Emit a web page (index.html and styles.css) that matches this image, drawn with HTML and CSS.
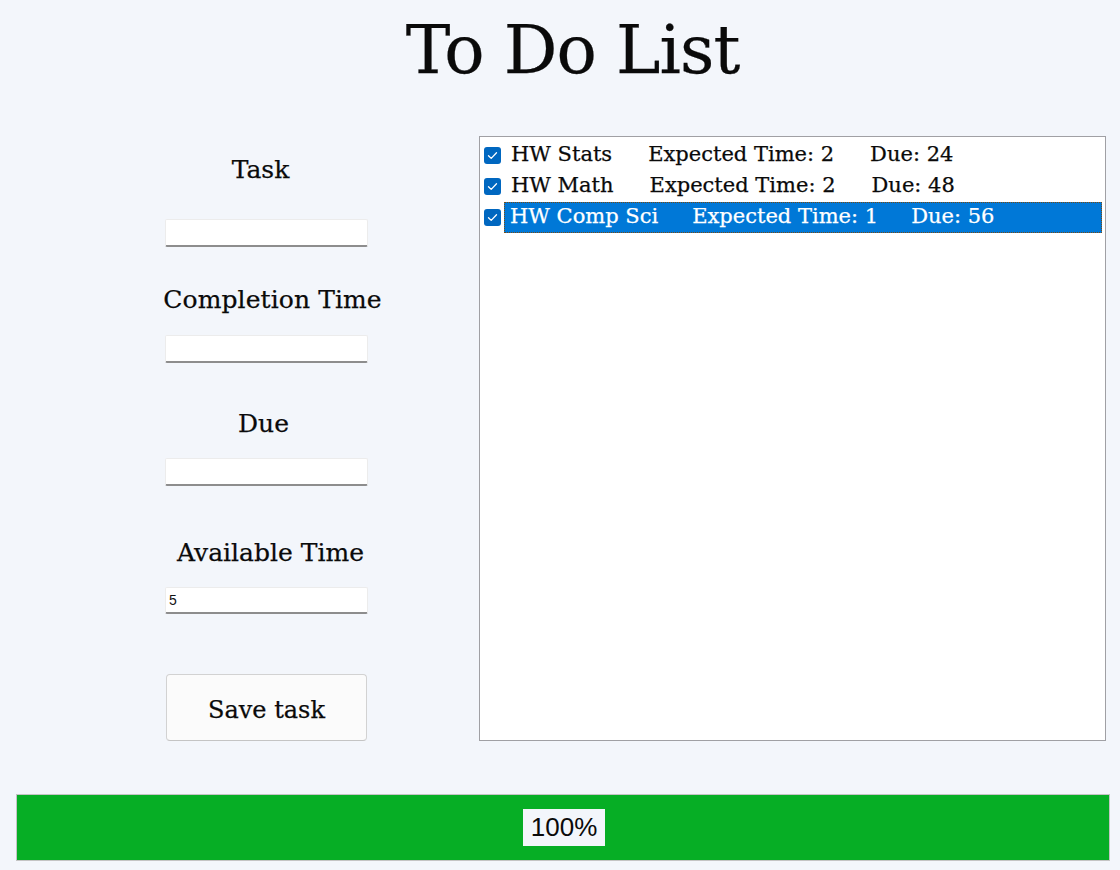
FILE: index.html
```html
<!DOCTYPE html>
<html>
<head>
<meta charset="utf-8">
<title>To Do List</title>
<link rel="stylesheet" href="styles.css">
</head>
<body>
<h1 class="title">To Do List</h1>
<div class="main">
  <form class="form">
    <label class="lbl lbl-task">Task</label>
    <input class="field f-task" type="text">
    <label class="lbl lbl-comp">Completion Time</label>
    <input class="field f-comp" type="text">
    <label class="lbl lbl-due">Due</label>
    <input class="field f-due" type="text">
    <label class="lbl lbl-avail">Available Time</label>
    <input class="field f-avail" type="text" value="5">
    <button class="save" type="button">Save task</button>
  </form>
  <div class="list">
    <div class="row">
      <span class="cb"><svg viewBox="0 0 17 17" width="17" height="17"><rect x="0" y="0" width="17" height="17" rx="3" fill="#0067c0"/><path d="M4.5 8.8 L7.2 11.4 L12.5 5.8" fill="none" stroke="#fff" stroke-width="1.3" stroke-linecap="round" stroke-linejoin="round"/></svg></span>
      <span class="item"><span class="name">HW Stats</span><span class="exp">Expected Time: 2</span><span class="due">Due: 24</span></span>
    </div>
    <div class="row">
      <span class="cb"><svg viewBox="0 0 17 17" width="17" height="17"><rect x="0" y="0" width="17" height="17" rx="3" fill="#0067c0"/><path d="M4.5 8.8 L7.2 11.4 L12.5 5.8" fill="none" stroke="#fff" stroke-width="1.3" stroke-linecap="round" stroke-linejoin="round"/></svg></span>
      <span class="item"><span class="name">HW Math</span><span class="exp">Expected Time: 2</span><span class="due">Due: 48</span></span>
    </div>
    <div class="row selected">
      <span class="cb"><svg viewBox="0 0 17 17" width="17" height="17"><rect x="0" y="0" width="17" height="17" rx="3" fill="#0067c0"/><path d="M4.5 8.8 L7.2 11.4 L12.5 5.8" fill="none" stroke="#fff" stroke-width="1.3" stroke-linecap="round" stroke-linejoin="round"/></svg></span>
      <span class="item"><span class="name">HW Comp Sci</span><span class="exp exp-sel">Expected Time: 1</span><span class="due due-sel">Due: 56</span></span>
    </div>
  </div>
</div>
<div class="progress">
  <div class="bar" style="width:100%"></div>
  <span class="pct">100%</span>
</div>
</body>
</html>
```

FILE: styles.css
```css
html, body {
  margin: 0;
  padding: 0;
  background: #f3f6fb;
}
body {
  font-family: "DejaVu Serif", "Liberation Serif", serif;
  color: #0a0a0a;
  width: 1120px;
  height: 870px;
  overflow: hidden;
  -webkit-text-stroke: 0.25px currentColor;
}
.title {
  margin: 0;
  padding-top: 5px;
  padding-left: 25px;
  height: 91px;
  font-weight: normal;
  font-size: 67px;
  line-height: 90px;
  text-align: center;
  letter-spacing: -1px;
}
.main {
  display: flex;
  margin-top: 40px;
  height: 605px;
}
.form {
  width: 203px;
  margin-left: 165px;
  display: flex;
  flex-direction: column;
  padding-top: 19px;
}
.lbl {
  display: block;
  font-size: 25px;
  line-height: 30px;
  height: 30px;
  text-align: center;
  white-space: nowrap;
}
.lbl-task { margin-left: -12px; }
.lbl-comp { margin-top: 38px; margin-right: -24px; margin-left: -12px; letter-spacing: 0.1px; }
.lbl-due { margin-top: 46px; margin-left: -6px; }
.lbl-avail { margin-top: 52px; margin-left: -8px; margin-right: -16px; }
.field {
  box-sizing: border-box;
  width: 203px;
  height: 28px;
  margin: 0;
  padding: 0 3px;
  background: #fff;
  border: 1px solid #ececec;
  border-bottom: 2px solid #8d8d8d;
  border-radius: 2px;
  font-family: "Liberation Sans", Arial, sans-serif;
  font-size: 14px;
  color: #111;
  outline: none;
  -webkit-text-stroke: 0;
}
.f-task { margin-top: 34px; }
.f-comp { margin-top: 20px; }
.f-due { margin-top: 19px; }
.f-avail { margin-top: 19px; }
.save {
  box-sizing: border-box;
  margin-top: 60px;
  margin-left: 1px;
  width: 201px;
  height: 67px;
  background: #fbfbfb;
  border: 1px solid #d2d2d2;
  border-bottom-color: #c4c4c4;
  border-radius: 4px;
  font-family: "DejaVu Serif", "Liberation Serif", serif;
  font-size: 24px;
  color: #0a0a0a;
  padding: 5px 0 0 0;
  -webkit-text-stroke: 0.25px currentColor;
}
.list {
  box-sizing: border-box;
  margin-left: 111px;
  width: 627px;
  height: 605px;
  background: #fff;
  border: 1px solid #a0a0a4;
  padding: 3px 3px 3px 4px;
}
.row {
  display: flex;
  align-items: center;
  height: 31px;
}
.cb {
  display: flex;
  width: 17px;
  height: 17px;
  margin-right: 3px;
  flex: none;
}
.item {
  flex: 1;
  box-sizing: border-box;
  height: 31px;
  display: flex;
  align-items: center;
  padding-left: 6px;
  padding-bottom: 3px;
  font-size: 21px;
  white-space: nowrap;
  border: 1px dotted transparent;
}
.exp { margin-left: 36px; }
.due { margin-left: 36px; }
.exp-sel { margin-left: 34px; }
.due-sel { margin-left: 33px; }
.selected .item {
  background: #0078d7;
  color: #fff;
  border: 1px dotted #7a4a10;
  padding-left: 5px;
}
.progress {
  position: relative;
  box-sizing: border-box;
  margin-top: 53px;
  margin-left: 16px;
  width: 1094px;
  height: 67px;
  border: 1px solid #c4c4c4;
  background: #e6e6e6;
  display: flex;
  align-items: center;
  justify-content: center;
}
.bar {
  position: absolute;
  left: 0;
  top: 0;
  bottom: 0;
  background: #06ae25;
}
.pct {
  position: relative;
  background: #f3f6fb;
  font-family: "Liberation Sans", Arial, sans-serif;
  font-size: 26px;
  line-height: 37px;
  padding: 0 8px;
  margin-left: 2px;
  color: #0a0a0a;
  -webkit-text-stroke: 0;
}
```
